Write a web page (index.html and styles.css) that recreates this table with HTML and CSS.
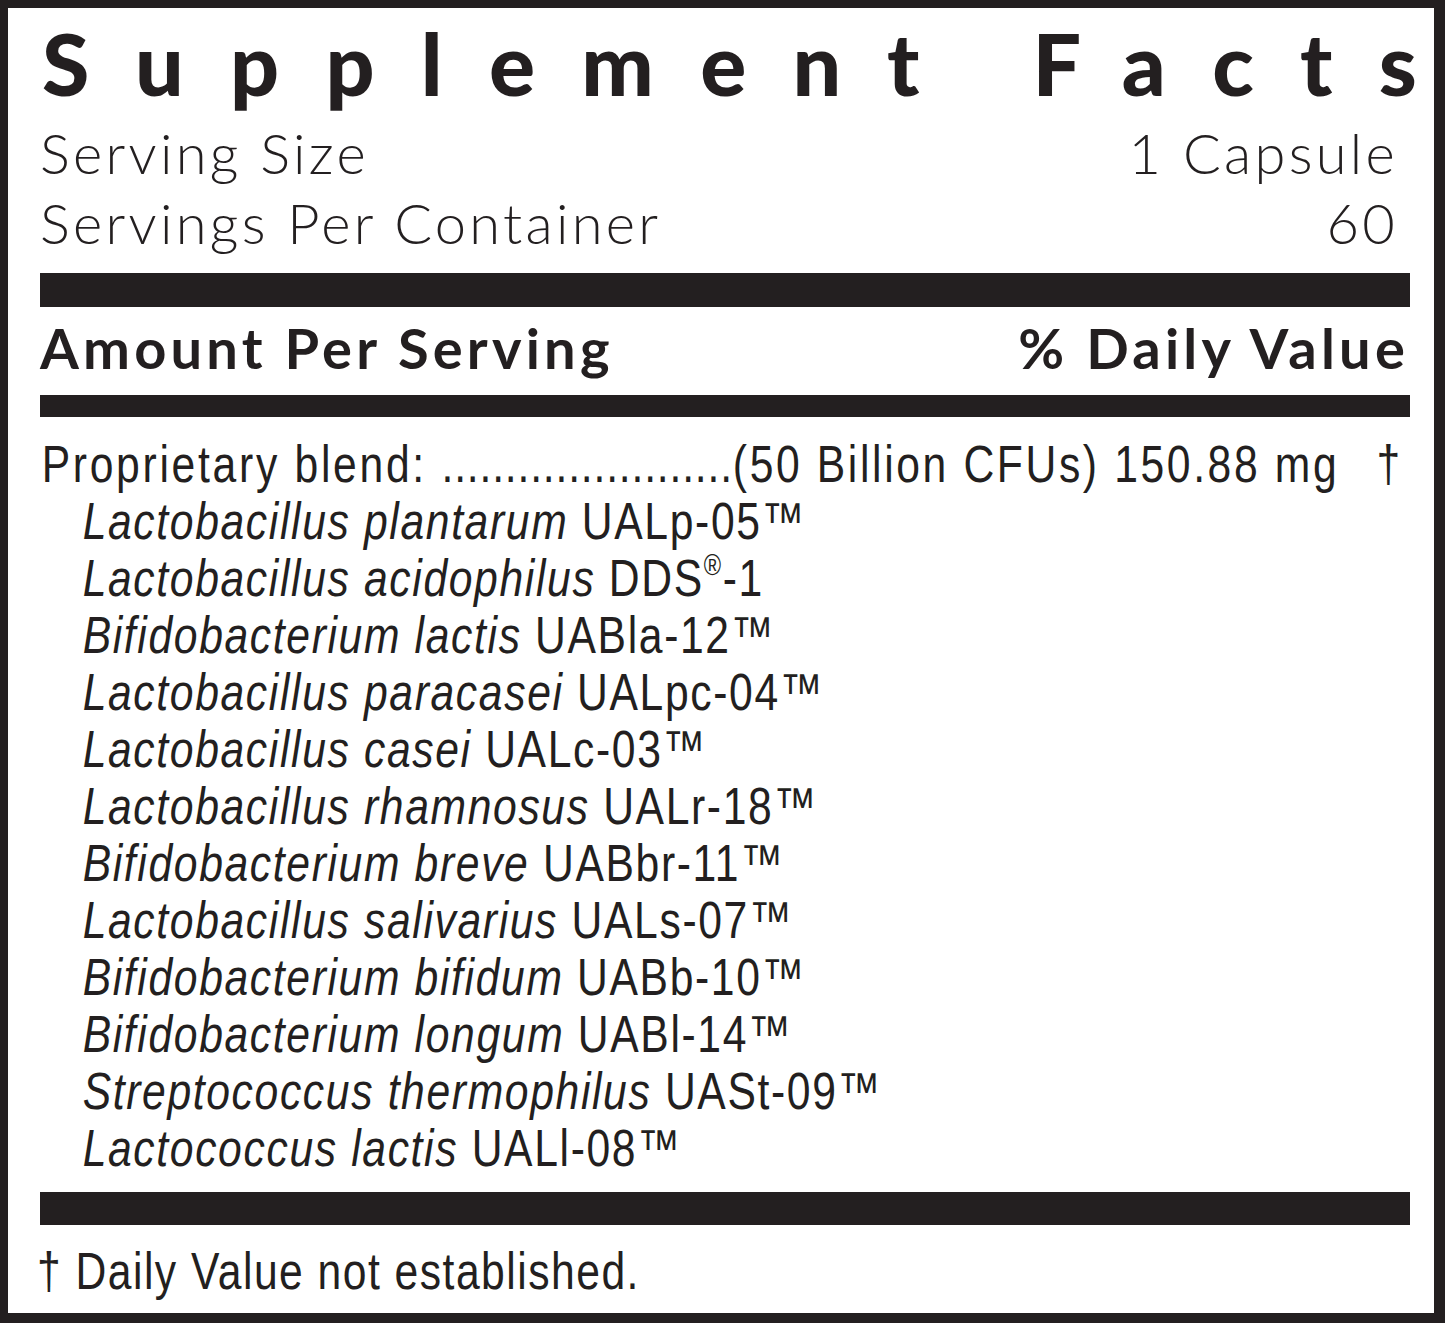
FILE: index.html
```html
<!DOCTYPE html>
<html lang="en">
<head>
<meta charset="utf-8">
<title>Supplement Facts</title>
<link rel="stylesheet" href="styles.css">
</head>
<body>
<div class="label">
  <h1 class="title">Supplement Fact<span class="last">s</span></h1>
  <div class="serving-row"><span>Serving Size</span><span>1 Capsule</span></div>
  <div class="serving-row"><span>Servings Per Container</span><span>60</span></div>
  <div class="bar bar-thick"></div>
  <div class="head-row"><span>Amount Per Serving</span><span>% Daily Value</span></div>
  <div class="bar bar-mid"></div>
  <div class="ingredients condensed">
    <div class="blend-row"><span><span class="blend-name">Proprietary blend: </span><span class="leader">.......................</span><span class="blend-amount">(50 Billion CFUs) 150.88 mg</span></span><span class="dagger">†</span></div>
    <ul class="strains">
      <li><i>Lactobacillus plantarum</i> UALp-05™</li>
      <li><i>Lactobacillus acidophilus</i> DDS<sup class="reg">®</sup>-1</li>
      <li><i>Bifidobacterium lactis</i> UABla-12™</li>
      <li><i>Lactobacillus paracasei</i> UALpc-04™</li>
      <li><i>Lactobacillus casei</i> UALc-03™</li>
      <li><i>Lactobacillus rhamnosus</i> UALr-18™</li>
      <li><i>Bifidobacterium breve</i> UABbr-11™</li>
      <li><i>Lactobacillus salivarius</i> UALs-07™</li>
      <li><i>Bifidobacterium bifidum</i> UABb-10™</li>
      <li><i>Bifidobacterium longum</i> UABl-14™</li>
      <li><i>Streptococcus thermophilus</i> UASt-09™</li>
      <li><i>Lactococcus lactis</i> UALl-08™</li>
    </ul>
  </div>
  <div class="bar bar-thick2"></div>
  <p class="footnote condensed">† Daily Value not established.</p>
</div>
</body>
</html>
```

FILE: styles.css
```css
html, body {
  margin: 0;
  padding: 0;
  background: #231f20;
}
.label {
  box-sizing: border-box;
  width: 1445px;
  height: 1323px;
  background: #ffffff;
  border-style: solid;
  border-color: #231f20;
  border-width: 8px 11px 10px 8px;
  padding: 0 24px 0 32px;
  color: #231f20;
  overflow: hidden;
}
.title {
  margin: 0;
  font-family: Lato, "Open Sans", sans-serif;
  font-weight: 900;
  font-size: 86px;
  line-height: 110px;
  letter-spacing: 46.3px;
  white-space: nowrap;
  padding-left: 2px;
}
.title .last {
  letter-spacing: 0;
}
.serving-row {
  display: flex;
  justify-content: space-between;
  font-family: Lato, "Open Sans", sans-serif;
  font-weight: 300;
  font-size: 56px;
  line-height: 70px;
  letter-spacing: 3.3px;
  padding-right: 12px;
}
.bar {
  background: #231f20;
}
.bar-thick {
  height: 34px;
  margin-top: 15px;
}
.head-row {
  display: flex;
  justify-content: space-between;
  font-family: Lato, "Open Sans", sans-serif;
  font-weight: 700;
  font-size: 56px;
  line-height: 82px;
  letter-spacing: 4.2px;
  margin-bottom: 6px;
  padding-right: 1px;
}
.bar-mid {
  height: 22px;
}
.condensed {
  font-family: "Liberation Sans", Arial, sans-serif;
  font-size: 52px;
  line-height: 57px;
  letter-spacing: 2px;
  width: calc(100% / 0.82);
  transform: scaleX(0.82);
  transform-origin: 0 0;
}
.ingredients {
  margin-top: 19px;
}
.blend-row {
  display: flex;
  justify-content: space-between;
  padding-left: 2px;
  padding-right: 12px;
  white-space: nowrap;
}
.blend-name {
  letter-spacing: 3.3px;
}
.leader {
  letter-spacing: 1px;
}
.blend-amount {
  letter-spacing: 3.2px;
}
.dagger {
  letter-spacing: 0;
}
.strains {
  list-style: none;
  margin: 0;
  padding: 0 0 0 52px;
}
.strains li {
  white-space: nowrap;
}
.strains i {
  font-style: italic;
}
.reg {
  font-size: 55%;
  vertical-align: 0;
  position: relative;
  top: -0.75em;
  line-height: 0;
}
.bar-thick2 {
  height: 33px;
  margin-top: 15px;
}
.footnote {
  margin: 18px 0 0 -3px;
  letter-spacing: 1.8px;
}
```
